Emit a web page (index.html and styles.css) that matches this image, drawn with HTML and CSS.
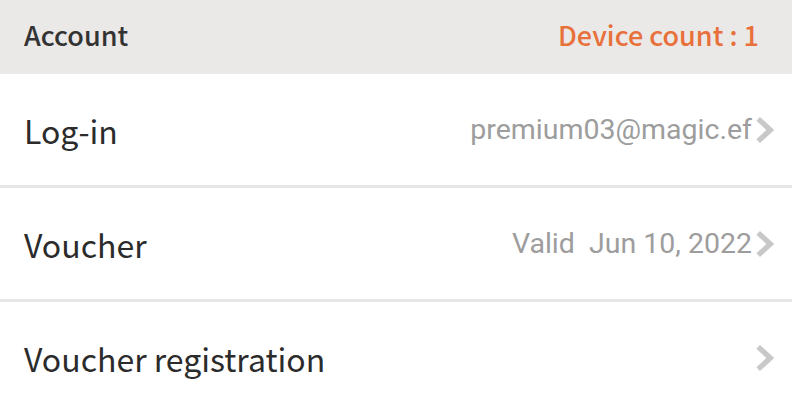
FILE: index.html
```html
<!DOCTYPE html>
<html lang="en">
<head>
<meta charset="utf-8">
<title>Account</title>
<link rel="stylesheet" href="styles.css">
</head>
<body>
  <div class="screen">
    <header class="section-head">
      <span class="section-title">Account</span>
      <span class="device-count">Device count : 1</span>
    </header>
    <ul class="menu">
      <li class="menu-row">
        <span class="menu-label">Log-in</span>
        <span class="menu-value">premium03@magic.ef</span>
        <svg class="chevron" viewBox="0 0 18 26" aria-hidden="true"><path d="M3 2.5 L14.5 13 L3 23.5"/></svg>
      </li>
      <li class="menu-row">
        <span class="menu-label">Voucher</span>
        <span class="menu-value">Valid&nbsp; Jun 10, 2022</span>
        <svg class="chevron" viewBox="0 0 18 26" aria-hidden="true"><path d="M3 2.5 L14.5 13 L3 23.5"/></svg>
      </li>
      <li class="menu-row">
        <span class="menu-label">Voucher registration</span>
        <span class="menu-value"></span>
        <svg class="chevron" viewBox="0 0 18 26" aria-hidden="true"><path d="M3 2.5 L14.5 13 L3 23.5"/></svg>
      </li>
    </ul>
  </div>
</body>
</html>
```

FILE: styles.css
```css
html, body {
  margin: 0;
  padding: 0;
  background: #ffffff;
}

.screen {
  width: 792px;
  height: 405px;
  overflow: hidden;
  font-family: "Noto Sans CJK KR", "Noto Sans", sans-serif;
}

.section-head {
  display: flex;
  align-items: center;
  justify-content: space-between;
  height: 74px;
  padding: 0 33px 5px 24px;
  box-sizing: border-box;
  background: #ebe8e8;
}

.section-title {
  font-size: 27px;
  color: #333333;
  font-weight: 500;
}

.device-count {
  font-size: 27px;
  color: #e8703a;
  font-weight: 500;
}

.menu {
  list-style: none;
  margin: 0;
  padding: 0;
}

.menu-row {
  display: flex;
  align-items: center;
  height: 111px;
  padding: 0 18px 0 24px;
  border-bottom: 3px solid #e6e6e6;
}

.menu-label {
  flex: 1;
  font-size: 32px;
  font-weight: 400;
  color: #2b2b2b;
}

.menu-value {
  font-family: Roboto, "Liberation Sans", sans-serif;
  font-size: 28.5px;
  color: #9d9d9d;
}

.chevron {
  width: 19px;
  height: 28px;
  margin-left: 3px;
}

.chevron path {
  fill: none;
  stroke: #c8c8c8;
  stroke-width: 5;
}
```
